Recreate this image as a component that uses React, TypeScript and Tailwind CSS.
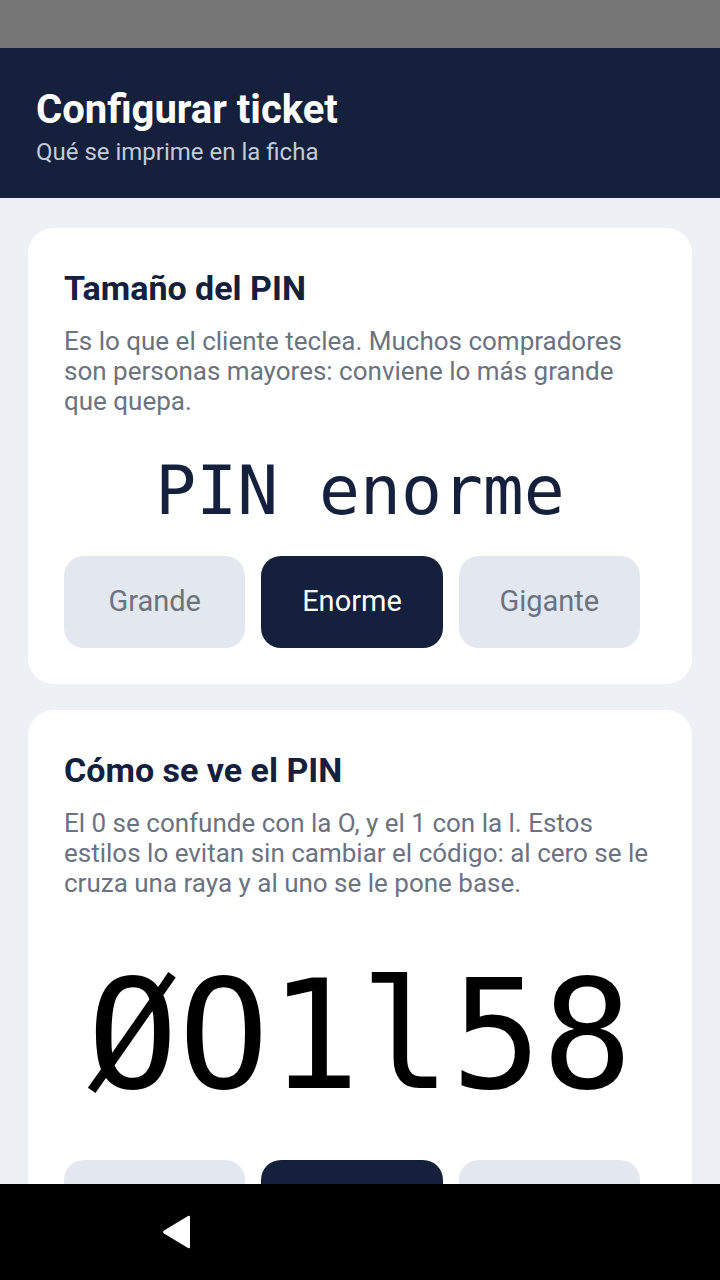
import { useState } from 'react';

const SIZES = ['Grande', 'Enorme', 'Gigante'];
const STYLES = ['Normal', 'Claro', 'Máximo'];

function Segmented({ options, value, onChange }: { options: string[]; value: number; onChange: (i: number) => void }) {
  return (
    <div className="grid w-[576px] grid-cols-3 gap-4">
      {options.map((o, i) => (
        <button
          key={o}
          onClick={() => onChange(i)}
          className={[
            'h-[92px] rounded-[20px] text-[29px]',
            i === value ? 'bg-[#14203c] text-white' : 'bg-[#e2e7f0] text-[#6b7280]',
          ].join(' ')}
        >
          {o}
        </button>
      ))}
    </div>
  );
}

function Card({ title, desc, children }: { title: string; desc: string; children: React.ReactNode }) {
  return (
    <section className="rounded-[26px] bg-white px-9 pt-[41px] pb-9">
      <h2 className="text-[34px] font-bold leading-[38px] text-[#14203c]">{title}</h2>
      <p className="mt-[19px] text-[26px] leading-[30px] text-[#6b7280]">{desc}</p>
      {children}
    </section>
  );
}

export default function App() {
  const [size, setSize] = useState(1);
  const [style, setStyle] = useState(1);

  return (
    <div className="flex h-[1280px] flex-col overflow-hidden bg-[#edf1f6] font-['Roboto',sans-serif]">
      <div className="h-12 shrink-0 bg-[#777777]" />

      <header className="h-[150px] shrink-0 bg-[#14203c] px-9 pt-[39px]">
        <h1 className="text-[40px] font-bold leading-[46px] text-white">Configurar ticket</h1>
        <p className="mt-[5px] text-[24px] leading-[28px] text-[#c3cbd8]">Qué se imprime en la ficha</p>
      </header>

      <main className="flex flex-1 flex-col gap-[26px] overflow-hidden px-7 pt-[30px]">
        <Card
          title="Tamaño del PIN"
          desc="Es lo que el cliente teclea. Muchos compradores son personas mayores: conviene lo más grande que quepa."
        >
          <div className="mt-[41px] text-center font-['DejaVu_Sans_Mono',monospace] text-[68px] leading-none text-[#14203c]">
            PIN {SIZES[size].toLowerCase()}
          </div>
          <div className="mt-[31px]">
            <Segmented options={SIZES} value={size} onChange={setSize} />
          </div>
        </Card>

        <Card
          title="Cómo se ve el PIN"
          desc="El 0 se confunde con la O, y el 1 con la l. Estos estilos lo evitan sin cambiar el código: al cero se le cruza una raya y al uno se le pone base."
        >
          <div className="mt-[63px] text-center font-['DejaVu_Sans_Mono',monospace] text-[151px] leading-none text-black">
            ØO1l58
          </div>
          <div className="mt-[48px]">
            <Segmented options={STYLES} value={style} onChange={setStyle} />
          </div>
        </Card>
      </main>

      <nav className="flex h-24 shrink-0 items-center bg-black pl-[160px]">
        <svg width="34" height="36" viewBox="0 0 34 36">
          <path d="M30 3 L30 33 Q30 35 28 34 L4 19.5 Q2 18 4 16.5 L28 2 Q30 1 30 3 Z" fill="white" />
        </svg>
      </nav>
    </div>
  );
}
